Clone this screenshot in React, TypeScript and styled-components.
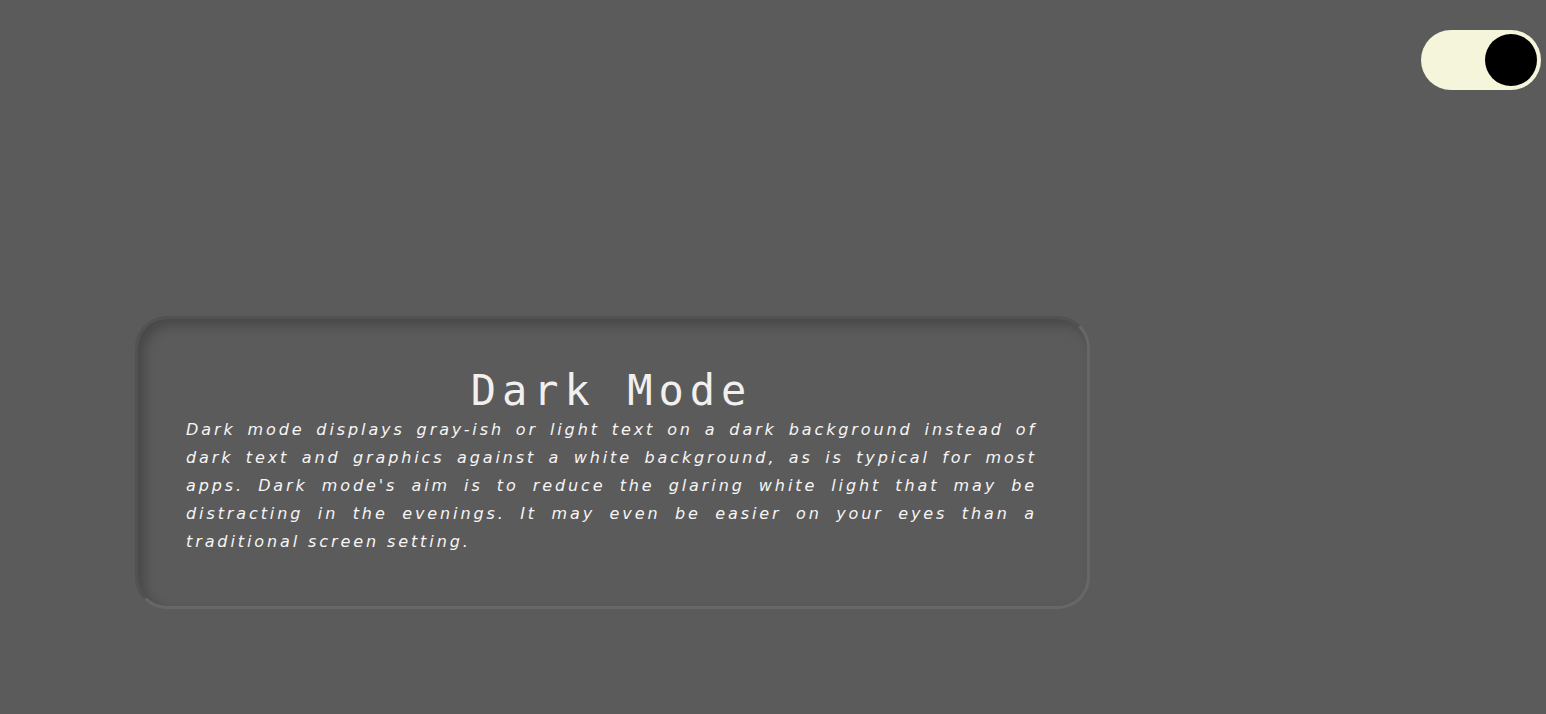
import React, { useState } from "react";
import styled, { createGlobalStyle } from "styled-components";

const Global = createGlobalStyle`
  html, body { margin: 0; padding: 0; background: #5b5b5b; }
  body { font-family: "DejaVu Sans", sans-serif; }
`;

const Page = styled.div`
  width: 1546px;
  height: 714px;
  background: #5b5b5b;
  display: flex;
  flex-direction: column;
  overflow: hidden;
`;

const TopBar = styled.div`
  display: flex;
  justify-content: flex-end;
  padding: 30px 5px 0 0;
`;

const Toggle = styled.button<{ $on: boolean }>`
  width: 120px;
  height: 60px;
  border: none;
  border-radius: 30px;
  background: #f5f5dc;
  padding: 4px;
  display: flex;
  justify-content: ${(p) => (p.$on ? "flex-end" : "flex-start")};
  align-items: center;
  cursor: pointer;
`;

const Knob = styled.span`
  width: 52px;
  height: 52px;
  border-radius: 50%;
  background: #000;
`;

const Card = styled.section`
  box-sizing: border-box;
  margin: 226px 0 0 135px;
  width: 955px;
  height: 293px;
  border-radius: 32px;
  border: 3px solid;
  border-color: #525252 #676767 #676767 #525252;
  box-shadow: inset 6px 6px 12px rgba(0, 0, 0, 0.22);
  padding: 46px 50px 0 48px;
`;

const Title = styled.h1`
  margin: 0;
  text-align: center;
  font-family: "DejaVu Sans Mono", monospace;
  font-weight: normal;
  font-size: 42px;
  letter-spacing: 6px;
  line-height: 51px;
  color: #f2efef;
`;

const Body = styled.p`
  margin: 0;
  font-family: "DejaVu Sans", sans-serif;
  font-style: italic;
  font-size: 16px;
  letter-spacing: 2.9px;
  line-height: 28px;
  text-align: justify;
  color: #f7f5f5;
`;

export default function App() {
  const [on, setOn] = useState(true);
  return (
    <Page>
      <Global />
      <TopBar>
        <Toggle $on={on} onClick={() => setOn(!on)} aria-label="Toggle dark mode">
          <Knob />
        </Toggle>
      </TopBar>
      <Card>
        <Title>Dark Mode</Title>
        <Body>
          Dark mode displays gray-ish or light text on a dark background instead of dark text and
          graphics against a white background, as is typical for most apps. Dark mode's aim is to
          reduce the glaring white light that may be distracting in the evenings. It may even be
          easier on your eyes than a traditional screen setting.
        </Body>
      </Card>
    </Page>
  );
}
